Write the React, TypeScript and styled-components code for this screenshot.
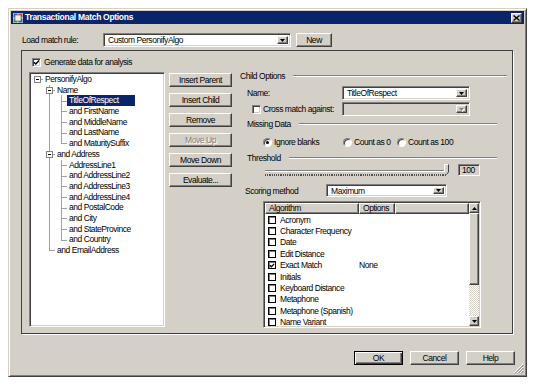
import React from 'react'
import styled, { createGlobalStyle, css } from 'styled-components'

const FONT = `"Liberation Sans", Arial, sans-serif`
const FACE = '#d4d0c8'
const NAVY = '#0a246a'
const LINE = '#a0a0a0'

const GlobalStyle = createGlobalStyle`
  html, body { margin: 0; padding: 0; background: #fff; }
  body { font-family: ${FONT}; font-size: 8.5px; letter-spacing: -0.45px; color: #000; }
  * { box-sizing: border-box; }
`

/* classic 3d edges */
const raised = css`
  background: ${FACE};
  border: 1px solid;
  border-color: #fff #404040 #404040 #fff;
  box-shadow: inset -1px -1px 0 #808080;
`
const sunken = css`
  border: 1px solid;
  border-color: #808080 #fff #fff #808080;
  box-shadow: inset 1px 1px 0 #404040, inset -1px -1px 0 ${FACE};
`

const Page = styled.div`
  padding: 8px 0 0 8px;
`

const Window = styled.div`
  position: relative;
  width: 519px;
  height: 369px;
  background: ${FACE};
  border: 1px solid;
  border-color: ${FACE} #404040 #404040 ${FACE};
  box-shadow: inset 1px 1px 0 #fff, inset -1px -1px 0 #808080;
  padding: 2px;
  display: flex;
  flex-direction: column;
`

const TitleBar = styled.div`
  height: 13px;
  background: ${NAVY};
  display: flex;
  align-items: center;
  padding: 0 2px;
  gap: 2px;
`

const TitleText = styled.span`
  color: #fff;
  font-weight: 700;
  font-size: 8.5px;
  letter-spacing: -0.3px;
  line-height: 13px;
`

const CloseBtn = styled.span`
  ${raised};
  margin-left: auto;
  width: 11px;
  height: 10px;
  display: flex;
  align-items: center;
  justify-content: center;
`

const Body = styled.div`
  flex: 1;
  display: flex;
  flex-direction: column;
  padding: 9px 0 0 11px;
`

const Row = styled.div<{ $pl?: number; $mt?: number; $h?: number }>`
  display: flex;
  align-items: center;
  padding-left: ${({ $pl }) => $pl ?? 0}px;
  margin-top: ${({ $mt }) => $mt ?? 0}px;
  height: ${({ $h }) => $h ?? 14}px;
  white-space: nowrap;
`

const Label = styled.span<{ $w?: number }>`
  flex: none;
  width: ${({ $w }) => ($w ? `${$w}px` : 'auto')};
`

/* combo box */
const ComboBox = styled.div<{ $w: number; $h?: number; $disabled?: boolean }>`
  ${sunken};
  width: ${({ $w }) => $w}px;
  height: ${({ $h }) => $h ?? 14}px;
  background: ${({ $disabled }) => ($disabled ? FACE : '#fff')};
  display: flex;
  padding: 2px;
`

const ComboText = styled.span`
  flex: 1;
  padding-left: 2px;
  display: flex;
  align-items: center;
  white-space: nowrap;
`

const DropBtn = styled.span`
  ${raised};
  width: 11px;
  display: flex;
  align-items: center;
  justify-content: center;
`

const Button = styled.div<{ $w?: number; $disabled?: boolean; $default?: boolean }>`
  ${raised};
  width: ${({ $w }) => ($w ? `${$w}px` : '100%')};
  height: 14px;
  display: flex;
  align-items: center;
  justify-content: center;
  flex: none;
  color: ${({ $disabled }) => ($disabled ? '#808080' : '#000')};
  text-shadow: ${({ $disabled }) => ($disabled ? '1px 1px 0 #fff' : 'none')};
  ${({ $default }) =>
    $default &&
    css`
      border: 1px solid #000;
      box-shadow: inset 1px 1px 0 #fff, inset -1px -1px 0 #404040, inset -2px -2px 0 #808080;
    `}
`

const Frame = styled.div`
  margin: 3px 0 0 -1px;
  width: 492px;
  height: 284px;
  border: 1px solid #404040;
  box-shadow: 1px 1px 0 #fff;
  display: flex;
  flex-direction: column;
  padding-top: 6px;
`

const CheckBox = styled.span`
  ${sunken};
  flex: none;
  width: 9px;
  height: 9px;
  background: #fff;
  display: inline-flex;
  align-items: center;
  justify-content: center;
`

const MainRow = styled.div`
  display: flex;
  align-items: flex-start;
  margin-top: 5px;
  padding-left: 7px;
`

/* tree */
const Tree = styled.div`
  ${sunken};
  background: #fff;
  width: 136px;
  height: 255px;
  padding: 1px;
  overflow: hidden;
`

const TreeRow = styled.div`
  display: flex;
  height: 10.7px;
`

const Conn = styled.span<{ $v: 'none' | 'full' | 'top'; $h: boolean }>`
  position: relative;
  flex: none;
  width: 12px;
  &::before {
    content: '';
    position: absolute;
    left: 6px;
    top: 0;
    width: 1px;
    height: ${({ $v }) => ($v === 'full' ? '100%' : $v === 'top' ? '50%' : '0')};
    background: ${LINE};
  }
  &::after {
    content: '';
    position: absolute;
    left: 6px;
    right: 0;
    top: 50%;
    height: 1px;
    background: ${({ $h }) => ($h ? LINE : 'transparent')};
  }
`

const Toggle = styled.span`
  position: absolute;
  z-index: 1;
  left: 3px;
  top: 50%;
  margin-top: -3.5px;
  width: 7px;
  height: 7px;
  border: 1px solid #808080;
  background: #fff;
  display: flex;
  align-items: center;
  justify-content: center;
  &::after {
    content: '';
    width: 3px;
    height: 1px;
    background: #000;
  }
`

const NodeLabel = styled.span<{ $sel?: boolean }>`
  line-height: 10.7px;
  padding: 0 2px;
  white-space: nowrap;
  ${({ $sel }) =>
    $sel &&
    css`
      width: 68px;
      background: ${NAVY};
      color: #fff;
    `}
`

const ButtonCol = styled.div`
  margin-left: 4px;
  width: 63px;
  padding-top: 1px;
  display: flex;
  flex-direction: column;
  gap: 6px;
`

/* right panel */
const Panel = styled.div`
  margin-left: 8px;
  width: 267px;
  display: flex;
  flex-direction: column;
`

const GroupHead = styled.div<{ $mt?: number; $pl?: number; $pr?: number }>`
  display: flex;
  align-items: center;
  height: 8px;
  margin-top: ${({ $mt }) => $mt ?? 0}px;
  padding-left: ${({ $pl }) => $pl ?? 0}px;
  padding-right: ${({ $pr }) => $pr ?? 0}px;
  white-space: nowrap;
`

const Etch = styled.span`
  flex: 1;
  margin-left: 8px;
  border-top: 1px solid #808080;
  border-bottom: 1px solid #fff;
`

const RadioItem = styled.span<{ $w?: number }>`
  display: flex;
  align-items: center;
  gap: 2px;
  width: ${({ $w }) => ($w ? `${$w}px` : 'auto')};
`

const Radio = styled.span`
  width: 9px;
  height: 9px;
  border-radius: 50%;
  border: 1px solid;
  border-color: #808080 #fff #fff #808080;
  box-shadow: inset 1px 1px 0 #404040;
  background: #fff;
  display: flex;
  align-items: center;
  justify-content: center;
`

const Dot = styled.span`
  width: 3px;
  height: 3px;
  border-radius: 50%;
  background: #000;
`

const Slider = styled.div`
  position: relative;
  width: 184px;
  height: 12px;
  display: flex;
  flex-direction: column;
  padding-top: 6px;
`

const Track = styled.span`
  border-top: 1px solid #808080;
  border-bottom: 1px solid #fff;
  margin-right: 2px;
`

const Ticks = styled.span`
  margin-top: 2px;
  height: 2px;
  background: repeating-linear-gradient(90deg, #505050 0 1px, transparent 1px 1.82px);
  margin-right: 2px;
`

const Thumb = styled.svg`
  position: absolute;
  right: 0;
  top: 0;
`

const ValueBox = styled.span`
  ${sunken};
  margin-left: 9px;
  width: 22px;
  height: 12px;
  background: ${FACE};
  padding: 0 3px;
  line-height: 10px;
`

/* list view */
const ListView = styled.div`
  ${sunken};
  margin: 4px 0 0 23px;
  width: 218px;
  height: 127px;
  background: #fff;
  padding: 1px;
  display: flex;
`

const ListBody = styled.div`
  flex: 1;
  overflow: hidden;
`

const Header = styled.div`
  display: flex;
  height: 11px;
`

const HeadCell = styled.span<{ $w?: number }>`
  ${raised};
  width: ${({ $w }) => ($w ? `${$w}px` : 'auto')};
  flex: ${({ $w }) => ($w ? 'none' : 1)};
  padding-left: 3px;
  line-height: 9px;
`

const ListRow = styled.div`
  display: flex;
  align-items: center;
  height: 11.4px;
  padding-left: 3px;
  white-space: nowrap;
`

const ListCheck = styled.span`
  flex: none;
  width: 8px;
  height: 8px;
  border: 1px solid #000;
  box-shadow: inset 1px 1px 0 #808080;
  background: #fff;
  margin-right: 4px;
  display: flex;
  align-items: center;
  justify-content: center;
`

const ScrollBar = styled.div`
  width: 10px;
  display: flex;
  flex-direction: column;
`

const ScrollBtn = styled.span`
  ${raised};
  height: 10px;
  display: flex;
  align-items: center;
  justify-content: center;
`

const ScrollThumb = styled.span`
  ${raised};
  height: 72px;
`

const ScrollTrack = styled.span`
  flex: 1;
  background: repeating-conic-gradient(#fff 0 25%, ${FACE} 0 50%) 0 0 / 2px 2px;
`

const Footer = styled.div`
  display: flex;
  justify-content: flex-end;
  gap: 7px;
  margin-top: 17px;
  padding-right: 9px;
`

const Grip = styled.svg`
  position: absolute;
  right: 2px;
  bottom: 2px;
`

/* data */
type TreeNode = {
  label: string
  depth: number
  guides: boolean[]
  last?: boolean
  toggle?: boolean
  selected?: boolean
}

const tree: TreeNode[] = [
  { label: 'PersonifyAlgo', depth: 0, guides: [], toggle: true },
  { label: 'Name', depth: 1, guides: [false], toggle: true },
  { label: 'TitleOfRespect', depth: 2, guides: [false, true], selected: true },
  { label: 'and FirstName', depth: 2, guides: [false, true] },
  { label: 'and MiddleName', depth: 2, guides: [false, true] },
  { label: 'and LastName', depth: 2, guides: [false, true] },
  { label: 'and MaturitySuffix', depth: 2, guides: [false, true], last: true },
  { label: 'and Address', depth: 1, guides: [false], toggle: true },
  { label: 'AddressLine1', depth: 2, guides: [false, true] },
  { label: 'and AddressLine2', depth: 2, guides: [false, true] },
  { label: 'and AddressLine3', depth: 2, guides: [false, true] },
  { label: 'and AddressLine4', depth: 2, guides: [false, true] },
  { label: 'and PostalCode', depth: 2, guides: [false, true] },
  { label: 'and City', depth: 2, guides: [false, true] },
  { label: 'and StateProvince', depth: 2, guides: [false, true] },
  { label: 'and Country', depth: 2, guides: [false, true], last: true },
  { label: 'and EmailAddress', depth: 1, guides: [false], last: true },
]

const algorithms: { name: string; on?: boolean; opt?: string }[] = [
  { name: 'Acronym' },
  { name: 'Character Frequency' },
  { name: 'Date' },
  { name: 'Edit Distance' },
  { name: 'Exact Match', on: true, opt: 'None' },
  { name: 'Initials' },
  { name: 'Keyboard Distance' },
  { name: 'Metaphone' },
  { name: 'Metaphone (Spanish)' },
  { name: 'Name Variant' },
]

const Arrow = ({ up, disabled }: { up?: boolean; disabled?: boolean }) => (
  <svg width="5" height="3" viewBox="0 0 5 3" style={{ overflow: 'visible' }}>
    {disabled && <polygon points={up ? '1,4 6,4 3.5,1' : '1,1 6,1 3.5,4'} fill="#fff" />}
    <polygon points={up ? '0,3 5,3 2.5,0' : '0,0 5,0 2.5,3'} fill={disabled ? '#808080' : '#000'} />
  </svg>
)

const Check = () => (
  <svg width="7" height="7" viewBox="0 0 7 7">
    <path d="M1 3.2 L2.8 5 L6 1.6" stroke="#000" strokeWidth="1.4" fill="none" />
  </svg>
)

const Combo = ({ w, h, text, disabled }: { w: number; h?: number; text?: string; disabled?: boolean }) => (
  <ComboBox $w={w} $h={h} $disabled={disabled}>
    <ComboText>{text}</ComboText>
    <DropBtn>
      <Arrow disabled={disabled} />
    </DropBtn>
  </ComboBox>
)

export default function App() {
  return (
    <Page>
      <GlobalStyle />
      <Window>
        <TitleBar>
          <svg width="10" height="10" viewBox="0 0 10 10">
            <rect x="0" y="0" width="10" height="10" fill="#d8e4f8" />
            <rect x="0.5" y="0.5" width="4" height="4" fill="#2e62c8" />
            <rect x="5.5" y="0.5" width="4" height="4" fill="#d83c2c" />
            <rect x="0.5" y="5.5" width="4" height="4" fill="#3c9c3c" />
            <rect x="5.5" y="5.5" width="4" height="4" fill="#2e62c8" />
            <rect x="2" y="2" width="6" height="6" fill="#f4f0e0" stroke="#5a5a5a" strokeWidth="0.6" />
          </svg>
          <TitleText>Transactional Match Options</TitleText>
          <CloseBtn>
            <svg width="7" height="6" viewBox="0 0 7 6">
              <path d="M0.5 0.5 L6.5 5.5 M6.5 0.5 L0.5 5.5" stroke="#000" strokeWidth="1.4" />
            </svg>
          </CloseBtn>
        </TitleBar>

        <Body>
          <Row>
            <Label $w={81}>Load match rule:</Label>
            <Combo w={188} text="Custom PersonifyAlgo" />
            <Button $w={36} style={{ marginLeft: 5 }}>New</Button>
          </Row>

          <Frame>
            <Row $pl={10} $h={10} style={{ gap: 3 }}>
              <CheckBox>
                <Check />
              </CheckBox>
              <span>Generate data for analysis</span>
            </Row>

            <MainRow>
              <Tree>
                {tree.map((n) => (
                  <TreeRow key={n.label}>
                    {n.depth === 0 ? (
                      <Conn $v="none" $h>
                        {n.toggle && <Toggle />}
                      </Conn>
                    ) : (
                      <>
                        {n.guides.map((g, i) => (
                          <Conn key={i} $v={g ? 'full' : 'none'} $h={false} />
                        ))}
                        <Conn $v={n.last ? 'top' : 'full'} $h>
                          {n.toggle && <Toggle />}
                        </Conn>
                      </>
                    )}
                    <NodeLabel $sel={n.selected}>{n.label}</NodeLabel>
                  </TreeRow>
                ))}
              </Tree>

              <ButtonCol>
                <Button>Insert Parent</Button>
                <Button>Insert Child</Button>
                <Button>Remove</Button>
                <Button $disabled>Move Up</Button>
                <Button>Move Down</Button>
                <Button>Evaluate...</Button>
              </ButtonCol>

              <Panel>
                <GroupHead>
                  <span>Child Options</span>
                  <Etch />
                </GroupHead>

                <Row $pl={7} $mt={6} $h={14}>
                  <Label $w={95}>Name:</Label>
                  <Combo w={128} text="TitleOfRespect" />
                </Row>

                <Row $pl={12} $mt={2} $h={14}>
                  <CheckBox style={{ marginRight: 2 }} />
                  <Label $w={79}>Cross match against:</Label>
                  <Combo w={128} disabled />
                </Row>

                <GroupHead $mt={4} $pl={7} $pr={10}>
                  <span>Missing Data</span>
                  <Etch />
                </GroupHead>

                <Row $pl={23} $mt={9} $h={10}>
                  <RadioItem $w={80}>
                    <Radio>
                      <Dot />
                    </Radio>
                    Ignore blanks
                  </RadioItem>
                  <RadioItem $w={54}>
                    <Radio />
                    Count as 0
                  </RadioItem>
                  <RadioItem>
                    <Radio />
                    Count as 100
                  </RadioItem>
                </Row>

                <GroupHead $mt={7} $pl={7} $pr={10}>
                  <span>Threshold</span>
                  <Etch />
                </GroupHead>

                <Row $pl={25} $mt={2} $h={12}>
                  <Slider>
                    <Track />
                    <Ticks />
                    <Thumb width="5" height="11" viewBox="0 0 5 11">
                      <path d="M0.5 0.5 H4.5 V8 L2.5 10.5 L0.5 8 Z" fill={FACE} />
                      <path d="M0.5 8 V0.5 H4" stroke="#fff" fill="none" />
                      <path d="M4.5 0.5 V8 L2.5 10.5" stroke="#404040" fill="none" />
                    </Thumb>
                  </Slider>
                  <ValueBox>100</ValueBox>
                </Row>

                <Row $pl={5} $mt={8} $h={13}>
                  <Label $w={81}>Scoring method</Label>
                  <Combo w={121} h={13} text="Maximum" />
                </Row>

                <ListView>
                  <ListBody>
                    <Header>
                      <HeadCell $w={94}>Algorithm</HeadCell>
                      <HeadCell $w={36}>Options</HeadCell>
                      <HeadCell />
                    </Header>
                    {algorithms.map((a) => (
                      <ListRow key={a.name}>
                        <ListCheck>{a.on && <Check />}</ListCheck>
                        <Label $w={79}>{a.name}</Label>
                        <span>{a.opt}</span>
                      </ListRow>
                    ))}
                  </ListBody>
                  <ScrollBar>
                    <ScrollBtn>
                      <Arrow up />
                    </ScrollBtn>
                    <ScrollThumb />
                    <ScrollTrack />
                    <ScrollBtn>
                      <Arrow />
                    </ScrollBtn>
                  </ScrollBar>
                </ListView>
              </Panel>
            </MainRow>
          </Frame>

          <Footer>
            <Button $w={49} $default>OK</Button>
            <Button $w={49}>Cancel</Button>
            <Button $w={49}>Help</Button>
          </Footer>
        </Body>

        <Grip width="11" height="11" viewBox="0 0 11 11">
          <path d="M10 1 L1 10 M10 4 L4 10 M10 7 L7 10" stroke="#fff" />
          <path d="M10.5 2 L2 10.5 M10.5 5 L5 10.5 M10.5 8 L8 10.5" stroke="#808080" />
        </Grip>
      </Window>
    </Page>
  )
}
